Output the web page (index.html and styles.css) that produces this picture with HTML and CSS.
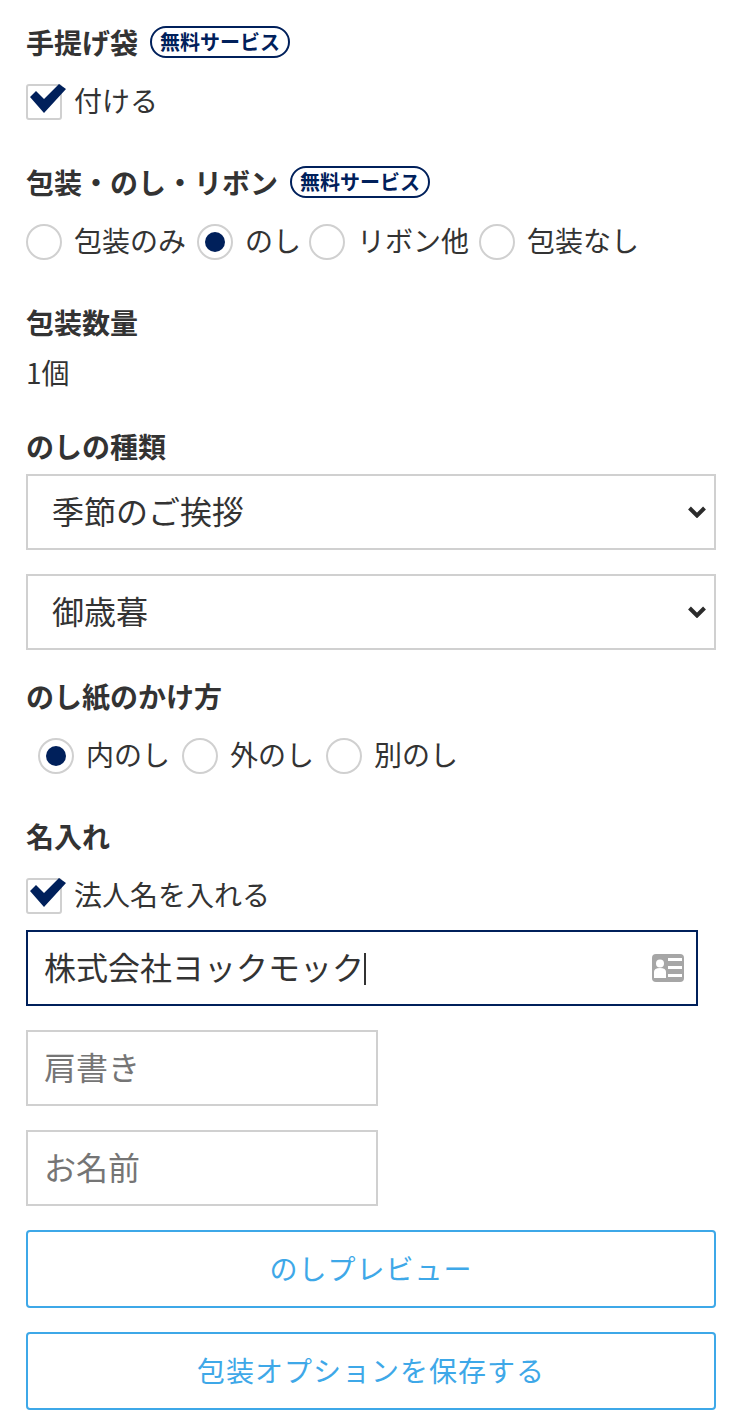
FILE: index.html
```html
<!doctype html>
<html lang="ja">
  <head>
    <meta charset="UTF-8" />
    <title>包装オプション</title>
    <link rel="stylesheet" href="styles.css">
  </head>
  <body>
    <form class="wrap-form">
      <div class="field-label bag-label">手提げ袋 <span class="badge">無料サービス</span></div>
      <label class="check-row">
        <span class="checkbox">
          <svg class="check-mark" width="42" height="32" viewBox="0 0 42 32"><polygon points="4,13 10,7 18,15 33,0 40,5 18,29" /></svg>
        </span>
        <span>付ける</span>
      </label>

      <div class="field-label wrap-label">包装・のし・リボン <span class="badge">無料サービス</span></div>
      <div class="radio-row wrap-types">
        <label class="radio-item"><span class="radio"></span>包装のみ</label>
        <label class="radio-item"><span class="radio on"></span>のし</label>
        <label class="radio-item"><span class="radio"></span>リボン他</label>
        <label class="radio-item"><span class="radio"></span>包装なし</label>
      </div>

      <div class="field-label qty-label">包装数量</div>
      <div class="qty-value">1個</div>

      <div class="field-label noshi-label">のしの種類</div>
      <div class="select-box first">
        <span>季節のご挨拶</span>
        <svg class="chevron" width="18" height="12" viewBox="0 0 18 12"><path d="M1.500 2 9 9.500 16.500 2" /></svg>
      </div>
      <div class="select-box">
        <span>御歳暮</span>
        <svg class="chevron" width="18" height="12" viewBox="0 0 18 12"><path d="M1.500 2 9 9.500 16.500 2" /></svg>
      </div>

      <div class="field-label how-label">のし紙のかけ方</div>
      <div class="radio-row inset">
        <label class="radio-item"><span class="radio on"></span>内のし</label>
        <label class="radio-item"><span class="radio"></span>外のし</label>
        <label class="radio-item"><span class="radio"></span>別のし</label>
      </div>

      <div class="field-label name-label">名入れ</div>
      <label class="check-row">
        <span class="checkbox">
          <svg class="check-mark" width="42" height="32" viewBox="0 0 42 32"><polygon points="4,13 10,7 18,15 33,0 40,5 18,29" /></svg>
        </span>
        <span>法人名を入れる</span>
      </label>

      <div class="text-box active">
        <span class="text-value">株式会社ヨックモック<span class="caret"></span></span>
        <svg class="card-icon" width="32" height="28" viewBox="0 0 32 28">
          <rect width="32" height="28" rx="4" fill="#a6a6a6" />
          <circle cx="8" cy="9.500" r="4" fill="#fff" />
          <path d="M2 24v-6c0-2.500 2-4 6-4s6 1.500 6 4v6z" fill="#fff" />
          <rect x="16" y="4" width="14" height="3" fill="#fff" />
          <rect x="16" y="12" width="14" height="3" fill="#fff" />
          <rect x="16" y="20" width="14" height="3" fill="#fff" />
        </svg>
      </div>
      <input class="text-input" type="text" placeholder="肩書き" />
      <input class="text-input" type="text" placeholder="お名前" />

      <button class="action-btn" type="button">のしプレビュー</button>
      <button class="action-btn" type="button">包装オプションを保存する</button>
    </form>
  </body>
</html>
```

FILE: styles.css
```css
* {
  box-sizing: border-box;
}

body {
  margin: 0;
  background: #fff;
  color: #333;
  font-family: "Noto Sans CJK JP", "Noto Sans", sans-serif;
  font-size: 28px;
}

.wrap-form {
  padding: 23px 30px 12px 26px;
}

.field-label {
  font-weight: 700;
  height: 40px;
  line-height: 38px;
  display: flex;
  align-items: flex-start;
  gap: 12px;
}

.wrap-label,
.qty-label,
.name-label {
  margin-top: 43px;
}

.noshi-label {
  margin-top: 34px;
}

.how-label {
  margin-top: 27px;
}

.badge {
  display: inline-block;
  height: 32px;
  line-height: 27px;
  margin-top: 3px;
  padding: 0 8px;
  border: 2px solid #00205b;
  border-radius: 16px;
  color: #00205b;
  font-size: 20px;
}

.check-row {
  display: flex;
  align-items: flex-start;
  gap: 12px;
  height: 36px;
  line-height: 33px;
  margin-top: 21px;
}

.checkbox {
  position: relative;
  width: 36px;
  height: 36px;
  border: 2px solid #d0d0d0;
  border-radius: 3px;
}

.check-mark {
  position: absolute;
  left: -2px;
  top: -2px;
  fill: #00205b;
}

.radio-row {
  display: flex;
  gap: 11px;
  margin-top: 21px;
}

.radio-row.inset {
  padding-left: 12px;
  gap: 12px;
}

.wrap-types .radio-item:nth-child(2) {
  margin-right: -3px;
}

.wrap-types .radio-item:nth-child(3) {
  margin-right: -1px;
}

.radio-item {
  display: flex;
  align-items: flex-start;
  gap: 12px;
  height: 36px;
  line-height: 33px;
}

.radio {
  width: 36px;
  height: 36px;
  border: 2px solid #d0d0d0;
  border-radius: 50%;
  display: flex;
  align-items: center;
  justify-content: center;
}

.radio.on::after {
  content: "";
  width: 20px;
  height: 20px;
  border-radius: 50%;
  background: #00205b;
}

.qty-value {
  height: 40px;
  line-height: 38px;
  margin-top: 10px;
}

.select-box {
  display: flex;
  align-items: center;
  justify-content: space-between;
  height: 76px;
  margin-top: 24px;
  padding: 0 8px 0 24px;
  border: 2px solid #d0d0d0;
  font-size: 32px;
}

.select-box.first {
  margin-top: 7px;
}

.select-box span {
  margin-bottom: 4px;
}

.chevron {
  fill: none;
  stroke: #2b2b2b;
  stroke-width: 4;
}

.text-box {
  display: flex;
  align-items: center;
  justify-content: space-between;
  width: 672px;
  height: 76px;
  margin-top: 16px;
  padding: 0 12px 0 16px;
  border: 2px solid #00205b;
  font-size: 32px;
}

.text-value {
  margin-bottom: 4px;
}

.caret {
  display: inline-block;
  width: 2px;
  height: 32px;
  vertical-align: -5px;
  background: #333;
}

.text-input {
  display: block;
  width: 352px;
  height: 76px;
  margin-top: 24px;
  padding: 0 16px 4px;
  border: 2px solid #d0d0d0;
  border-radius: 0;
  font-family: inherit;
  font-size: 32px;
  outline: none;
}

.text-input::placeholder {
  color: #757575;
  opacity: 1;
}

.action-btn {
  display: block;
  width: 690px;
  height: 78px;
  margin-top: 24px;
  padding: 0 0 2px;
  background: #fff;
  border: 2px solid #3ea8e8;
  border-radius: 4px;
  color: #3ea8e8;
  font-family: inherit;
  font-size: 28px;
  letter-spacing: 1px;
}
```
